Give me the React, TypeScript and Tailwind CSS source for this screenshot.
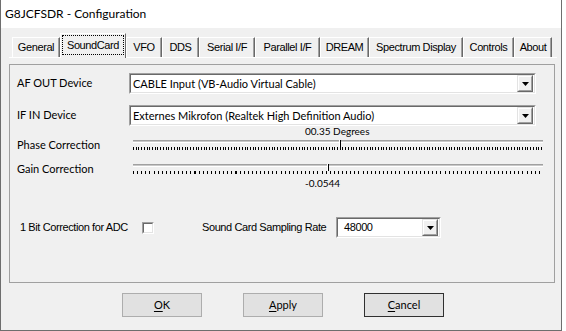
import type { ReactNode } from "react";

const segoe = "font-['Lato',sans-serif]";
const mss = "font-['Liberation_Sans',Arial,sans-serif] tracking-[-0.4px]";

const tabs = [
  { label: "General", w: "w-[48px]" },
  { label: "SoundCard", w: "w-[66px]", selected: true },
  { label: "VFO", w: "w-[36px]" },
  { label: "DDS", w: "w-[37px]" },
  { label: "Serial I/F", w: "w-[56px]" },
  { label: "Parallel I/F", w: "w-[65px]" },
  { label: "DREAM", w: "w-[49px]" },
  { label: "Spectrum Display", w: "w-[94px]" },
  { label: "Controls", w: "w-[51px]" },
  { label: "About", w: "w-[38px]" },
];

function Sunken({ className, children }: { className: string; children: ReactNode }) {
  return (
    <div
      className={`border border-t-[#a0a0a0] border-l-[#a0a0a0] border-b-white border-r-white ${className}`}
    >
      <div className="h-full border border-t-[#696969] border-l-[#696969] border-b-[#e3e3e3] border-r-[#e3e3e3] bg-white flex items-center">
        {children}
      </div>
    </div>
  );
}

function ArrowButton() {
  return (
    <div className="ml-auto mr-px h-[17px] w-[16px] border border-t-[#e3e3e3] border-l-[#e3e3e3] border-b-[#696969] border-r-[#696969]">
      <div className="h-full border border-t-white border-l-white border-b-[#a0a0a0] border-r-[#a0a0a0] bg-[#f0f0f0] flex items-center justify-center">
        <svg width="7" height="4" viewBox="0 0 7 4">
          <path d="M0 0h7L3.5 4z" fill="#000" />
        </svg>
      </div>
    </div>
  );
}

function Combo({ value, w, font }: { value: string; w: string; font: string }) {
  return (
    <Sunken className={`${w} h-[21px]`}>
      <span className={`pl-[2px] text-[11px] leading-none text-black ${font}`}>{value}</span>
      <ArrowButton />
    </Sunken>
  );
}

function Slider({ thumb, ticks }: { thumb: string; ticks: string }) {
  return (
    <div className="relative">
      <div className="h-[3px] border-t border-[#a0a0a0] bg-[#c8c8c8] border-b border-b-white" />
      <div className={`mt-[4px] h-[3px] ${ticks}`} />
      <div className={`absolute top-0 ${thumb} h-[7px] w-[2px] border-l border-white border-r border-r-black`} />
    </div>
  );
}

function Button({ children, dflt }: { children: ReactNode; dflt?: boolean }) {
  return (
    <div
      className={`w-[80px] h-[24px] border ${
        dflt ? "border-[#303030]" : "border-[#adadad]"
      } bg-[#e1e1e1] flex items-center justify-center text-[11px] text-black ${segoe}`}
    >
      {children}
    </div>
  );
}

export default function App() {
  return (
    <div className="w-[566px] h-[331px] bg-white flex">
      <div className="w-[562px] h-[331px] border-l border-r border-b border-[#6e6e6e] flex flex-col">
        <div className={`h-[28px] shrink-0 bg-white pl-[4px] flex items-center text-[12px] text-black ${segoe}`}>
          G8JCFSDR - Configuration
        </div>
        <div className="flex-1 bg-[#f0f0f0] flex flex-col">
          <div className="ml-[8px] mt-[5px] w-[548px] h-[25px] flex items-end pl-[3px] border-b border-white">
            {tabs.map((t) =>
              t.selected ? (
                <div
                  key={t.label}
                  className={`${t.w} h-[25px] -mb-px relative bg-[#f0f0f0] border-t border-l border-white border-r border-r-[#696969] px-px pt-px pb-[3px]`}
                >
                  <div className={`h-full border border-dotted border-black flex items-center justify-center text-[11px] text-black ${mss} tracking-[-0.3px]`}>
                    {t.label}
                  </div>
                </div>
              ) : (
                <div
                  key={t.label}
                  className={`${t.w} h-[20px] border-t border-l border-white border-r border-r-[#696969] shadow-[inset_-1px_0_0_#a0a0a0] flex items-center justify-center text-[11px] text-black ${mss} tracking-[-0.3px]`}
                >
                  {t.label}
                </div>
              )
            )}
          </div>

          <div className="ml-[8px] mt-[6px] w-[546px] h-[219px] border border-[#a0a0a0] pl-[7px] pt-[8px] text-black">
            <div className="flex items-center h-[21px]">
              <div className={`w-[112px] text-[11px] ${segoe}`}>AF OUT Device</div>
              <Combo value="CABLE Input (VB-Audio Virtual Cable)" w="w-[407px]" font={segoe} />
            </div>
            <div className="flex items-center h-[21px] mt-[11px]">
              <div className={`w-[112px] text-[11px] ${segoe}`}>IF IN Device</div>
              <Combo value="Externes Mikrofon (Realtek High Definition Audio)" w="w-[407px]" font={segoe} />
            </div>

            <div className="flex">
              <div className={`w-[116px] text-[11px] leading-[12px] ${segoe}`}>
                <div className="mt-[13px]">Phase Correction</div>
                <div className="mt-[12px]">Gain Correction</div>
              </div>
              <div className="w-[410px]">
                <div className={`h-[11px] pl-[172px] text-[10px] leading-[11px] ${segoe}`}>00.35 Degrees</div>
                <div className="mt-[3px]">
                  <Slider
                    thumb="left-[206px]"
                    ticks="bg-[repeating-linear-gradient(90deg,#000_0_1px,transparent_1px_2.72px)]"
                  />
                </div>
                <div className="mt-[14px]">
                  <Slider
                    thumb="left-[194px]"
                    ticks="bg-[repeating-linear-gradient(90deg,#000_0_1px,transparent_1px_4.1px)]"
                  />
                </div>
                <div className={`mt-[4px] h-[11px] pl-[172px] text-[10px] leading-[11px] ${segoe}`}>-0.0544</div>
              </div>
            </div>

            <div className="mt-[28px] flex items-center h-[21px]">
              <div className={`ml-[3px] w-[122px] text-[11px] ${mss}`}>1 Bit Correction for ADC</div>
              <Sunken className="w-[12px] h-[12px]">
                <span />
              </Sunken>
              <div className={`ml-[48px] w-[134px] text-[11px] ${mss}`}>Sound Card Sampling Rate</div>
              <Combo value="48000" w="w-[105px]" font={`${mss} pl-[6px]`} />
            </div>
          </div>

          <div className="mt-[10px] pl-[121px] flex gap-[41px]">
            <Button>
              <span className="underline underline-offset-2">O</span>K
            </Button>
            <Button>
              <span className="underline underline-offset-2">A</span>pply
            </Button>
            <Button dflt>
              <span className="underline underline-offset-2">C</span>ancel
            </Button>
          </div>
        </div>
      </div>
    </div>
  );
}
